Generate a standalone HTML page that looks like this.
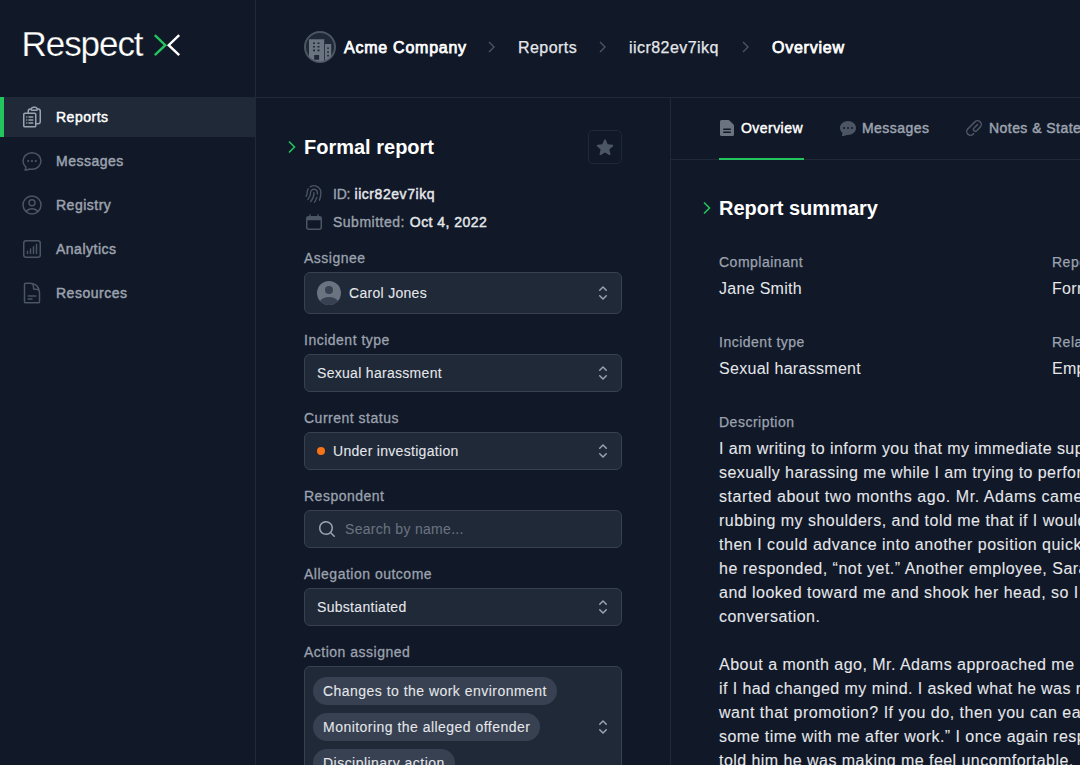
<!DOCTYPE html>
<html><head><meta charset="utf-8">
<style>
*{box-sizing:border-box;margin:0;padding:0}
html,body{width:1080px;height:765px;overflow:hidden;background:#111827;font-family:"Liberation Sans",sans-serif;color:#e5e7eb}
.a{position:absolute;white-space:nowrap;line-height:1}
svg{position:absolute;overflow:visible}
#vline{position:absolute;left:255px;top:0;width:1px;height:765px;background:#1f2937}
#hline{position:absolute;left:256px;top:97px;width:824px;height:1px;background:#1f2937}
#pline{position:absolute;left:670px;top:98px;width:1px;height:667px;background:#1f2937}
.logo{left:21.5px;top:26px;font-size:35px;color:#fff;letter-spacing:-1.05px;-webkit-text-stroke:0.25px #111827}
.nav{position:absolute;left:0;width:255px;height:40px}
.nav.act{background:#1f2937}
.nav.act:before{content:"";position:absolute;left:0;top:0;width:4px;height:40px;background:#22c55e}
.nav span{position:absolute;left:56px;top:13px;font-size:14px;line-height:1;-webkit-text-stroke-width:0.45px;letter-spacing:0.5px;color:#9ca3af;white-space:nowrap}
.nav.act span{color:#fff}
.nav svg{left:20px;top:8px}
.crumb{top:40px;font-size:16px;color:#e5e7eb;letter-spacing:0.45px;-webkit-text-stroke-width:0.25px}
.crumb.b{color:#fff;letter-spacing:0.75px;-webkit-text-stroke-width:0.75px}
.lbl{left:304px;font-size:14px;color:#9ca3af;letter-spacing:0.5px;-webkit-text-stroke-width:0.28px}
.box{position:absolute;left:304px;width:318px;height:38px;background:#1f2937;border:1px solid #374151;border-radius:6px}
.val{font-size:14px;color:#e5e7eb;letter-spacing:0.3px;-webkit-text-stroke-width:0.08px}
.ud{left:593px}
.h2{font-size:20px;font-weight:bold;color:#fff}
.tab{top:121px;font-size:14px;-webkit-text-stroke-width:0.45px;letter-spacing:0.45px;color:#9ca3af}
.dl{font-size:14px;color:#9ca3af;letter-spacing:0.5px;-webkit-text-stroke-width:0.25px}
.dd{font-size:16px;color:#e5e7eb;letter-spacing:0.3px;-webkit-text-stroke-width:0.02px}
.chip{position:absolute;left:313px;height:28px;border-radius:14px;background:#374151;font-size:14px;color:#e5e7eb;line-height:28px;padding:0 10px;white-space:nowrap;letter-spacing:0.47px;-webkit-text-stroke-width:0.08px}
.desc{position:absolute;left:719px;top:437px;width:700px;font-size:16px;line-height:24px;color:#e5e7eb;white-space:nowrap;-webkit-text-stroke-width:0.08px}
.desc div{height:24px}
</style></head>
<body>
<div id="vline"></div>
<div id="hline"></div>
<div id="pline"></div>

<!-- logo -->
<div class="a logo">Respect</div>
<svg style="left:0;top:0" width="200" height="80"><path d="M154.8 35.2 L165.3 45.2 L154.8 55.2" fill="none" stroke="#22c55e" stroke-width="2.4"/><path d="M179.2 35.2 L168.7 45.2 L179.2 55.2" fill="none" stroke="#fff" stroke-width="2.4"/></svg>

<!-- nav -->
<div class="nav act" style="top:97px"><svg width="24" height="24" viewBox="0 0 24 24" fill="none" stroke="#9ca3af" stroke-width="1.5" stroke-linecap="round" stroke-linejoin="round"><path d="M9 12h3.75M9 15h3.75M9 18h3.75m3 .75H18a2.25 2.25 0 0 0 2.25-2.25V6.108c0-1.135-.845-2.098-1.976-2.192a48.424 48.424 0 0 0-1.123-.08m-5.801 0c-.065.21-.1.433-.1.664 0 .414.336.75.75.75h4.5a.75.75 0 0 0 .75-.75 2.250 2.250 0 0 0-.1-.664m-5.8 0A2.251 2.251 0 0 1 13.5 2.25H15c1.012 0 1.867.668 2.150 1.586m-5.8 0c-.376.023-.75.05-1.124.08C9.095 4.01 8.25 4.973 8.25 6.108V8.25m0 0H4.875c-.621 0-1.125.504-1.125 1.125v11.250c0 .621.504 1.125 1.125 1.125h9.75c.621 0 1.125-.504 1.125-1.125V9.375c0-.621-.504-1.125-1.125-1.125H8.25ZM6.75 12h.008v.008H6.75V12Zm0 3h.008v.008H6.75V15Zm0 3h.008v.008H6.75V18Z"/></svg><span>Reports</span></div>
<div class="nav" style="top:141px"><svg width="24" height="24" viewBox="0 0 24 24" fill="none" stroke="#4b5563" stroke-width="1.5" stroke-linecap="round" stroke-linejoin="round"><path d="M8.625 12a.375.375 0 1 1-.75 0 .375.375 0 0 1 .75 0Zm0 0H8.25m4.125 0a.375.375 0 1 1-.75 0 .375.375 0 0 1 .75 0Zm0 0H12m4.125 0a.375.375 0 1 1-.75 0 .375.375 0 0 1 .75 0Zm0 0h-.375M21 12c0 4.556-4.03 8.25-9 8.25a9.764 9.764 0 0 1-2.555-.337A5.972 5.972 0 0 1 5.41 20.97a5.969 5.969 0 0 1-.474-.065 4.48 4.48 0 0 0 .978-2.025c.09-.457-.133-.901-.467-1.226C3.93 16.178 3 14.189 3 12c0-4.556 4.03-8.25 9-8.25s9 3.694 9 8.25Z"/></svg><span>Messages</span></div>
<div class="nav" style="top:185px"><svg width="24" height="24" viewBox="0 0 24 24" fill="none" stroke="#4b5563" stroke-width="1.5" stroke-linecap="round" stroke-linejoin="round"><path d="M17.982 18.725A7.488 7.488 0 0 0 12 15.75a7.488 7.488 0 0 0-5.982 2.975m11.963 0a9 9 0 1 0-11.963 0m11.963 0A8.966 8.966 0 0 1 12 21a8.966 8.966 0 0 1-5.982-2.275M15 9.75a3 3 0 1 1-6 0 3 3 0 0 1 6 0Z"/></svg><span>Registry</span></div>
<div class="nav" style="top:229px"><svg width="24" height="24" viewBox="0 0 24 24" fill="none" stroke="#4b5563" stroke-width="1.5" stroke-linecap="round" stroke-linejoin="round"><path d="M7.5 14.25v2.25m3-4.5v4.5m3-6.75v6.75m3-9v9M6 20.25h12A2.25 2.25 0 0 0 20.25 18V6A2.25 2.25 0 0 0 18 3.75H6A2.25 2.25 0 0 0 3.75 6v12A2.25 2.25 0 0 0 6 20.25Z"/></svg><span>Analytics</span></div>
<div class="nav" style="top:273px"><svg width="24" height="24" viewBox="0 0 24 24" fill="none" stroke="#4b5563" stroke-width="1.5" stroke-linecap="round" stroke-linejoin="round"><path d="M19.5 14.25v-2.625a3.375 3.375 0 0 0-3.375-3.375h-1.5A1.125 1.125 0 0 1 13.5 7.125v-1.5a3.375 3.375 0 0 0-3.375-3.375H8.25m0 12.75h7.5m-7.5 3H12M10.5 2.25H5.625c-.621 0-1.125.504-1.125 1.125v17.25c0 .621.504 1.125 1.125 1.125h12.75c.621 0 1.125-.504 1.125-1.125V11.25a9 9 0 0 0-9-9Z"/></svg><span>Resources</span></div>

<!-- header crumbs -->
<svg style="left:304px;top:31px" width="32" height="32" viewBox="0 0 32 32"><defs><clipPath id="bc"><circle cx="16" cy="16" r="14.5"/></clipPath></defs><circle cx="16" cy="16" r="15" fill="#1f2937" stroke="#4b5563" stroke-width="2"/><g clip-path="url(#bc)"><path d="M5 8.2h15.2v23H5z M21 13h6.2v18h-6.2z" fill="#6b7280"/><path d="M9 11.5h2v1.6H9zM13.5 11.5h2v1.6h-2zM9 15h2v1.6H9zM13.5 15h2v1.6h-2zM9 18.6h2v1.6H9zM13.5 18.6h2v1.6h-2zM10.2 24h4.9v4.8h-4.9zM23.2 16.5h1.7v1.6h-1.7zM23.2 20.2h1.7v1.6h-1.7zM23.2 23.8h1.7v1.6h-1.7z" fill="#1f2937"/></g></svg>
<div class="a crumb b" style="left:344px">Acme Company</div>
<svg style="left:486px;top:40px" width="12" height="14"><path d="M3 2l5 5-5 5" fill="none" stroke="#4b5563" stroke-width="1.4"/></svg>
<div class="a crumb" style="left:518px">Reports</div>
<svg style="left:597px;top:40px" width="12" height="14"><path d="M3 2l5 5-5 5" fill="none" stroke="#4b5563" stroke-width="1.4"/></svg>
<div class="a crumb" style="left:629px">iicr82ev7ikq</div>
<svg style="left:740px;top:40px" width="12" height="14"><path d="M3 2l5 5-5 5" fill="none" stroke="#4b5563" stroke-width="1.4"/></svg>
<div class="a crumb b" style="left:772px">Overview</div>

<!-- left panel -->
<svg style="left:286px;top:140px" width="12" height="14"><path d="M3 1.5l5.5 5.5-5.5 5.5" fill="none" stroke="#22c55e" stroke-width="1.6"/></svg>
<div class="a h2" style="left:304px;top:137px">Formal report</div>
<div style="position:absolute;left:588px;top:130px;width:34px;height:34px;border:1px solid #1f2937;border-radius:5px"></div>
<svg style="left:595px;top:137px" width="20" height="20" viewBox="0 0 20 20"><path fill="#4b5563" d="M10.868 2.884c-.321-.772-1.415-.772-1.736 0l-1.83 4.401-4.753.381c-.833.067-1.171 1.107-.536 1.651l3.62 3.102-1.106 4.637c-.194.813.691 1.456 1.405 1.02L10 15.591l4.069 2.485c.713.436 1.598-.207 1.404-1.02l-1.106-4.637 3.62-3.102c.635-.544.297-1.584-.536-1.65l-4.752-.382-1.831-4.401Z"/></svg>

<svg style="left:302.5px;top:183px" width="22" height="22" viewBox="0 0 24 24" fill="none" stroke="#4b5563" stroke-width="1.5" stroke-linecap="round" stroke-linejoin="round"><path d="M7.864 4.243A7.5 7.5 0 0 1 19.5 10.5c0 2.92-.556 5.709-1.568 8.268M5.742 6.364A7.465 7.465 0 0 0 4.5 10.5a7.464 7.464 0 0 1-1.15 3.993m1.989 3.559A11.209 11.209 0 0 0 8.25 10.5a3.75 3.75 0 1 1 7.5 0c0 .527-.021 1.049-.064 1.565M12 10.5a14.94 14.94 0 0 1-3.6 9.75m6.633-4.596a18.666 18.666 0 0 1-2.485 5.33"/></svg>
<div class="a val" style="left:333px;top:187px"><span style="color:#9ca3af;letter-spacing:-0.2px;-webkit-text-stroke-width:0.35px">ID:</span></div><div class="a val" style="left:354.5px;top:187px;letter-spacing:0.55px;-webkit-text-stroke-width:0.45px">iicr82ev7ikq</div>
<svg style="left:305px;top:213px" width="18" height="18" viewBox="0 0 18 18" fill="none" stroke="#4b5563" stroke-width="1.5"><rect x="1.75" y="3.75" width="14.5" height="12.5" rx="2"/><path d="M1.75 5.5h14.5" stroke-width="3.5"/><path d="M5 1.2v2.5M13 1.2v2.5" stroke-width="1.3"/></svg>
<div class="a val" style="left:333px;top:215px"><span style="color:#9ca3af;letter-spacing:0.5px;-webkit-text-stroke-width:0.35px">Submitted:</span></div><div class="a val" style="left:409.8px;top:215px;letter-spacing:0.45px;-webkit-text-stroke-width:0.45px">Oct 4, 2022</div>

<div class="a lbl" style="top:251px">Assignee</div>
<div class="box" style="top:272px;height:42px"></div>
<svg style="left:317px;top:281px" width="24" height="24" viewBox="0 0 24 24"><defs><clipPath id="cc"><circle cx="12" cy="12" r="12"/></clipPath></defs><circle cx="12" cy="12" r="12" fill="#6b7280"/><g clip-path="url(#cc)" fill="#374151"><circle cx="12" cy="9" r="4"/><ellipse cx="12" cy="23" rx="10" ry="7"/></g></svg>
<div class="a val" style="left:349px;top:286px">Carol Jones</div>
<svg class="ud" style="top:283px" width="20" height="20" viewBox="0 0 20 20"><path fill="#9ca3af" d="M10.53 3.47a.75.75 0 0 0-1.06 0L6.22 6.72a.75.75 0 0 0 1.06 1.06L10 5.06l2.72 2.72a.75.75 0 1 0 1.06-1.06l-3.25-3.25Zm-4.31 9.81 3.25 3.25a.75.75 0 0 0 1.06 0l3.25-3.25a.75.75 0 1 0-1.06-1.06L10 14.940l-2.72-2.72a.75.75 0 0 0-1.06 1.06Z"/></svg>

<div class="a lbl" style="top:333px">Incident type</div>
<div class="box" style="top:354px"></div>
<div class="a val" style="left:317px;top:366px">Sexual harassment</div>
<svg class="ud" style="top:363px" width="20" height="20" viewBox="0 0 20 20"><path fill="#9ca3af" d="M10.53 3.47a.75.75 0 0 0-1.06 0L6.22 6.72a.75.75 0 0 0 1.06 1.06L10 5.06l2.72 2.72a.75.75 0 1 0 1.06-1.06l-3.25-3.25Zm-4.31 9.81 3.25 3.25a.75.75 0 0 0 1.06 0l3.25-3.25a.75.75 0 1 0-1.06-1.06L10 14.940l-2.72-2.72a.75.75 0 0 0-1.06 1.06Z"/></svg>

<div class="a lbl" style="top:411px">Current status</div>
<div class="box" style="top:432px"></div>
<div style="position:absolute;left:317px;top:447px;width:8px;height:8px;border-radius:4px;background:#f97316"></div>
<div class="a val" style="left:333px;top:444px">Under investigation</div>
<svg class="ud" style="top:441px" width="20" height="20" viewBox="0 0 20 20"><path fill="#9ca3af" d="M10.53 3.47a.75.75 0 0 0-1.06 0L6.22 6.72a.75.75 0 0 0 1.06 1.06L10 5.06l2.72 2.72a.75.75 0 1 0 1.06-1.06l-3.25-3.25Zm-4.31 9.81 3.25 3.25a.75.75 0 0 0 1.06 0l3.25-3.25a.75.75 0 1 0-1.06-1.06L10 14.940l-2.72-2.72a.75.75 0 0 0-1.06 1.06Z"/></svg>

<div class="a lbl" style="top:489px">Respondent</div>
<div class="box" style="top:510px"></div>
<svg style="left:317px;top:519px" width="20" height="20" viewBox="0 0 20 20"><path fill="#9ca3af" fill-rule="evenodd" d="M9 3.5a5.5 5.5 0 1 0 0 11 5.5 5.5 0 0 0 0-11ZM2 9a7 7 0 1 1 12.452 4.391l3.328 3.329a.75.75 0 1 1-1.06 1.06l-3.329-3.328A7 7 0 0 1 2 9Z"/></svg>
<div class="a val" style="left:345px;top:522px;color:#6b7280">Search by name...</div>

<div class="a lbl" style="top:567px">Allegation outcome</div>
<div class="box" style="top:588px"></div>
<div class="a val" style="left:317px;top:600px">Substantiated</div>
<svg class="ud" style="top:597px" width="20" height="20" viewBox="0 0 20 20"><path fill="#9ca3af" d="M10.53 3.47a.75.75 0 0 0-1.06 0L6.22 6.72a.75.75 0 0 0 1.06 1.06L10 5.06l2.72 2.72a.75.75 0 1 0 1.06-1.06l-3.25-3.25Zm-4.31 9.81 3.25 3.25a.75.75 0 0 0 1.06 0l3.25-3.25a.75.75 0 1 0-1.06-1.06L10 14.940l-2.72-2.72a.75.75 0 0 0-1.06 1.06Z"/></svg>

<div class="a lbl" style="top:645px">Action assigned</div>
<div class="box" style="top:666px;height:130px"></div>
<div class="chip" style="top:677px">Changes to the work environment</div>
<div class="chip" style="top:713px">Monitoring the alleged offender</div>
<div class="chip" style="top:749px">Disciplinary action</div>
<svg class="ud" style="top:717px" width="20" height="20" viewBox="0 0 20 20"><path fill="#9ca3af" d="M10.53 3.47a.75.75 0 0 0-1.06 0L6.22 6.72a.75.75 0 0 0 1.06 1.06L10 5.06l2.72 2.72a.75.75 0 1 0 1.06-1.06l-3.25-3.25Zm-4.31 9.81 3.25 3.25a.75.75 0 0 0 1.06 0l3.25-3.25a.75.75 0 1 0-1.06-1.06L10 14.940l-2.72-2.72a.75.75 0 0 0-1.06 1.06Z"/></svg>

<!-- right panel tabs -->
<div style="position:absolute;left:671px;top:159px;width:409px;height:1px;background:#1f2937"></div>
<div style="position:absolute;left:719px;top:158px;width:85px;height:2px;background:#22c55e"></div>
<svg style="left:717px;top:118px" width="20" height="20" viewBox="0 0 20 20"><path fill="#6b7280" fill-rule="evenodd" d="M4.5 2A1.5 1.5 0 0 0 3 3.5v13A1.5 1.5 0 0 0 4.5 18h11a1.5 1.5 0 0 0 1.5-1.5V7.621a1.5 1.5 0 0 0-.44-1.06l-4.12-4.122A1.5 1.5 0 0 0 11.378 2H4.5Zm2.25 8.5a.75.75 0 0 0 0 1.5h6.5a.75.75 0 0 0 0-1.5h-6.5Zm0 3a.75.75 0 0 0 0 1.5h6.5a.75.75 0 0 0 0-1.5h-6.5Z"/></svg>
<div class="a tab" style="left:741px;color:#fff">Overview</div>
<svg style="left:838px;top:118px" width="20" height="20" viewBox="0 0 20 20"><path fill="#4b5563" fill-rule="evenodd" d="M10 3c-4.31 0-8 3.033-8 7 0 2.024.978 3.825 2.499 5.085a3.478 3.478 0 0 1-.522 1.756.75.75 0 0 0 .584 1.143 5.976 5.976 0 0 0 3.936-1.108c.487.082.99.124 1.503.124 4.31 0 8-3.033 8-7s-3.690-7-8-7Zm-4 8a1 1 0 1 0 0-2 1 1 0 0 0 0 2Zm5-1a1 1 0 1 1-2 0 1 1 0 0 1 2 0Zm3 1a1 1 0 1 0 0-2 1 1 0 0 0 0 2Z"/></svg>
<div class="a tab" style="left:862px">Messages</div>
<svg style="left:964px;top:118px" width="20" height="20" viewBox="0 0 20 20"><path fill="#4b5563" fill-rule="evenodd" d="M15.621 4.379a3 3 0 0 0-4.242 0l-7 7a3 3 0 0 0 4.241 4.243h.001l.497-.5a.75.75 0 0 1 1.064 1.057l-.498.501-.002.002a4.5 4.5 0 0 1-6.364-6.364l7-7a4.5 4.5 0 0 1 6.368 6.36l-3.455 3.553A2.625 2.625 0 1 1 9.520 9.520l3.450-3.451a.75.75 0 1 1 1.061 1.06l-3.450 3.451a1.125 1.125 0 0 0 1.587 1.595l3.454-3.553a3 3 0 0 0 0-4.242Z"/></svg>
<div class="a tab" style="left:989px">Notes &amp; Statements</div>

<!-- report summary -->
<svg style="left:701px;top:201px" width="12" height="14"><path d="M3 1.5l5.5 5.5-5.5 5.5" fill="none" stroke="#22c55e" stroke-width="1.6"/></svg>
<div class="a h2" style="left:719px;top:198px">Report summary</div>

<div class="a dl" style="left:719px;top:255px">Complainant</div>
<div class="a dd" style="left:719px;top:281px">Jane Smith</div>
<div class="a dl" style="left:1052px;top:255px">Report type</div>
<div class="a dd" style="left:1052px;top:281px">Formal report</div>

<div class="a dl" style="left:719px;top:335px">Incident type</div>
<div class="a dd" style="left:719px;top:361px">Sexual harassment</div>
<div class="a dl" style="left:1052px;top:335px">Relationship</div>
<div class="a dd" style="left:1052px;top:361px">Employee</div>

<div class="a dl" style="left:719px;top:415px">Description</div>
<div class="desc"><div style="letter-spacing:0.435px">I am writing to inform you that my immediate supervisor, Mr. Adams, has been</div><div style="letter-spacing:0.424px">sexually harassing me while I am trying to perform my job duties. The harassment</div><div style="letter-spacing:0.570px">started about two months ago. Mr. Adams came into my office, started</div><div style="letter-spacing:0.485px">rubbing my shoulders, and told me that if I would go on a date with him,</div><div style="letter-spacing:0.520px">then I could advance into another position quickly. I asked if he was joking and</div><div style="letter-spacing:0.489px">he responded, “not yet.” Another employee, Sarah Brown, walked in</div><div style="letter-spacing:0.483px">and looked toward me and shook her head, so I left the</div><div style="letter-spacing:0.480px">conversation.</div><div style="letter-spacing:0.480px"></div><div style="letter-spacing:0.481px">About a month ago, Mr. Adams approached me</div><div style="letter-spacing:0.427px">if I had changed my mind. I asked what he was referring to and he said, “Don’t you</div><div style="letter-spacing:0.513px">want that promotion? If you do, then you can easily get it if you will</div><div style="letter-spacing:0.459px">some time with me after work.” I once again responded no and</div><div style="letter-spacing:0.450px">told him he was making me feel uncomfortable.</div></div>

</body></html>
